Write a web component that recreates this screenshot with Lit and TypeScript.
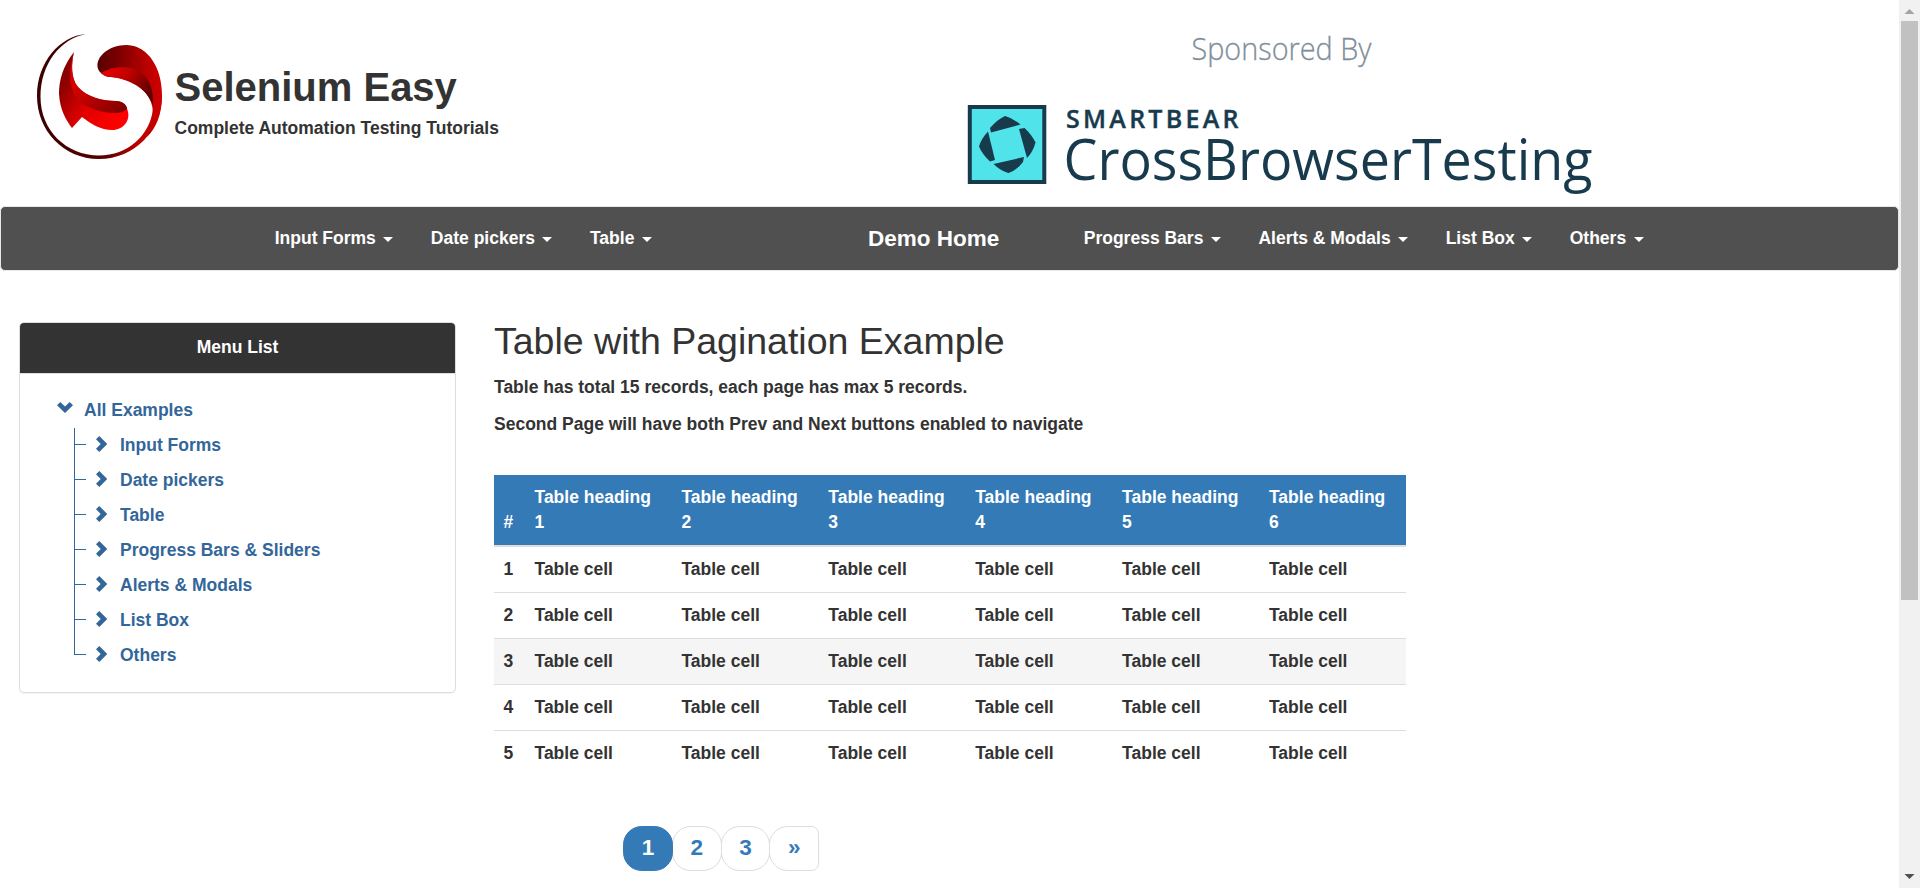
import { LitElement, html, css } from "lit";
import { customElement } from "lit/decorators.js";

const SANS = css`"Liberation Sans", Arial, Helvetica, sans-serif`;

@customElement("site-header")
class SiteHeader extends LitElement {
  static styles = css`
    :host { display: flex; height: 206px; font-family: ${SANS}; color: #333; }
    .brand { display: flex; width: 968px; box-sizing: border-box; padding: 33px 0 0 37px; }
    .mark { width: 126px; height: 126px; flex: none; }
    .names { padding: 32px 0 0 11.5px; white-space: nowrap; }
    .title { font-size: 40px; font-weight: 700; line-height: 44px; }
    .sub { font-size: 17.5px; font-weight: 700; line-height: 25px; margin-top: 7px; }
    .sponsor { width: 931px; height: 206px; flex: none; overflow: visible; }
    .sponsor text { font-family: "Open Sans", sans-serif; }
  `;
  render() {
    return html`
      <div class="brand">
        <svg class="mark" viewBox="37 33 126 126">
          <defs>
            <linearGradient id="ring" x1="0" y1="0" x2="1" y2="0"><stop offset="0" stop-color="#3a0000"/><stop offset=".55" stop-color="#5a0000"/><stop offset=".8" stop-color="#b80000"/><stop offset="1" stop-color="#d00000"/></linearGradient>
            <linearGradient id="top" x1="0" y1="0" x2="1" y2="0"><stop offset="0" stop-color="#5a0000"/><stop offset=".3" stop-color="#780000"/><stop offset=".75" stop-color="#b80000"/><stop offset="1" stop-color="#d00000"/></linearGradient>
            <linearGradient id="fold" x1="0" y1="0" x2="1" y2=".5"><stop offset="0" stop-color="#f00000"/><stop offset=".5" stop-color="#c00000"/><stop offset="1" stop-color="#600000"/></linearGradient>
            <linearGradient id="left" x1="0" y1="0" x2="1" y2=".7"><stop offset="0" stop-color="#780000"/><stop offset=".25" stop-color="#900000"/><stop offset=".6" stop-color="#e00000"/><stop offset="1" stop-color="#ff0000"/></linearGradient>
            <linearGradient id="inner" x1="0" y1="0" x2="1" y2="1"><stop offset="0" stop-color="#f00000"/><stop offset=".45" stop-color="#c80000"/><stop offset="1" stop-color="#780000"/></linearGradient>
          </defs>
          <path fill="url(#ring)" d="M86 34C60 36 37 62 37 96C37 130 63 159 99 159C135 159 162 130 162 95L153 109C150 135 128 155.500 99 155.500C66 155.500 40.500 130 40.500 97C40.500 64 60 39 86 34Z"/>
          <path fill="url(#top)" d="M101 73C91 64 103 45 127 45C149 46 162 69 162 95C162 115 156 128 147 137C154 123 155 108 149 98C142 84 125 78 111 77C106 77 103 75 101 73Z"/>
          <path fill="url(#fold)" d="M101 73C111 67 123 65 134 69C148 74 154 88 153 105C146 87 128 79 111 77C106 77 103 75 101 73Z"/>
          <path fill="url(#left)" d="M74 52C63 66 59 80 59 94C60 110 66 120 72 128L82 117C91 124 101 130 112 130C124 130 130 120 128 112C127 105 122 101 116 101C102 101 87 97 78 87C71 79 71 64 74 52Z"/>
          <path fill="url(#inner)" d="M74 52C71 64 71 79 78 87C87 97 102 101 116 101C123 101 127 105 127 109C120 117 94 112 81 103C69 94 68 71 74 52Z"/>
        </svg>
        <div class="names">
          <div class="title">Selenium Easy</div>
          <div class="sub">Complete Automation Testing Tutorials</div>
        </div>
      </div>
      <svg class="sponsor" viewBox="968 0 931 206">
        <text x="1191.500" y="60" font-size="31" font-weight="300" fill="#7f8e9b" stroke="#7f8e9b" stroke-width=".3" textLength="180" lengthAdjust="spacingAndGlyphs">Sponsored By</text>
        <rect x="969.8" y="107" width="74.5" height="75" fill="#50e3ea" stroke="#183a4d" stroke-width="4"/>
        <g fill="#183a4d">
          <path d="M991 132.500L990 128Q998 119 1005 116Q1013 118 1020.500 124.500Z"/>
          <path d="M1019 129L1024.500 128Q1032 135 1035.500 142.500Q1033 152 1027 158Z"/>
          <path d="M993.500 164L1024 157L1023 162Q1017 170 1008.500 173Q1000 170.500 993.500 164Z"/>
          <path d="M988 131.500L995 160L990 161.500Q982 154 979 146.500Q981 139 988 131.500Z"/>
        </g>
        <text x="1066" y="127.500" font-size="25" font-weight="600" fill="#183a4d" stroke="#183a4d" stroke-width=".4" textLength="172.500" lengthAdjust="spacing">SMARTBEAR</text>
        <text x="1063.500" y="180" font-size="56" fill="#183a4d" textLength="529" lengthAdjust="spacingAndGlyphs">CrossBrowserTesting</text>
      </svg>`;
  }
}

@customElement("site-nav")
class SiteNav extends LitElement {
  static styles = css`
    :host { display: flex; box-sizing: border-box; height: 65px; background: #505050; border: 1px solid #e7e7e7; border-radius: 5px; font: 700 17.5px/25px ${SANS}; color: #fff; white-space: nowrap; }
    .group { display: flex; padding: 19px 0 0; }
    .left { width: 551px; padding-left: 255px; }
    .home { width: 258px; padding-top: 19px; font-size: 22.5px; }
    .home span { padding-left: 61px; }
    .item { display: flex; align-items: center; padding: 0 18.75px; height: 25px; }
    .caret { width: 0; margin-left: 7.5px; border-top: 5px solid #fff; border-left: 5px solid transparent; border-right: 5px solid transparent; margin-top: 2px; }
  `;
  item(label: string) {
    return html`<div class="item">${label}<span class="caret"></span></div>`;
  }
  render() {
    return html`
      <div class="group left">${["Input Forms", "Date pickers", "Table"].map((l) => this.item(l))}</div>
      <div class="group home"><span>Demo Home</span></div>
      <div class="group">${["Progress Bars", "Alerts & Modals", "List Box", "Others"].map((l) => this.item(l))}</div>`;
  }
}

@customElement("menu-panel")
class MenuPanel extends LitElement {
  static styles = css`
    :host { display: block; box-sizing: border-box; width: 437px; height: 371px; border: 1px solid #ddd; border-radius: 5px; box-shadow: 0 1px 1px rgba(0,0,0,.05); font: 700 17.5px/25px ${SANS}; overflow: hidden; }
    .head { height: 51px; padding-top: 12px; box-sizing: border-box; background: #333; color: #fff; text-align: center; border-bottom: 1px solid #ddd; }
    .tree { color: #336699; padding-top: 24px; }
    .root { display: flex; padding-left: 36.5px; height: 30px; line-height: 25px; }
    .root svg { width: 16px; height: 11px; margin: 4px 11.5px 0 0; }
    .branch { margin: 0 0 0 54px; }
    .row { display: flex; height: 35px; line-height: 35px; }
    .tick { width: 12px; height: 35px; box-sizing: border-box; border-left: 1px solid #336699; background: linear-gradient(#336699, #336699) 0 16px / 12px 1px no-repeat; }
    .row:last-child .tick { height: 17px; }
    .row svg { width: 11px; height: 16px; margin: 8px 13px 0 10px; }
    svg { fill: #336699; flex: none; }
  `;
  render() {
    const items = ["Input Forms", "Date pickers", "Table", "Progress Bars & Sliders", "Alerts & Modals", "List Box", "Others"];
    return html`
      <div class="head">Menu List</div>
      <div class="tree">
        <div class="root"><svg viewBox="0 0 16 11"><path d="M3.300 0L8 4.600L12.700 0L16 3.200L8 11L0 3.200Z"/></svg>All Examples</div>
        <div class="branch">
          ${items.map((t) => html`<div class="row"><span class="tick"></span><svg viewBox="0 0 11 16"><path d="M3.300 0L11.200 8L3.300 16L0 12.700L4.700 8L0 3.300Z"/></svg>${t}</div>`)}
        </div>
      </div>`;
  }
}

@customElement("paged-table")
class PagedTable extends LitElement {
  static styles = css`
    :host { display: block; width: 912px; font: 700 17.5px/25px ${SANS}; color: #333; }
    .title { font-size: 37.5px; font-weight: 400; line-height: 41px; white-space: nowrap; }
    .note { margin-top: 12px; }
    .note.first { margin-top: 13px; }
    .table { margin-top: 38px; }
    .row { display: grid; grid-template-columns: 30.5px repeat(6, 146.9px); border-bottom: 1px solid #ddd; height: 45px; align-items: end; }
    .row:last-child { border-bottom: 0; }
    .row > span { padding: 0 10px 10px; }
    .row > span:first-child { padding-left: 9.5px; padding-right: 0; }
    .head { height: 70px; background: #337ab7; color: #fff; border-bottom: 2px solid #ddd; }
    .hover { background: #f5f5f5; }
    .pages { display: flex; margin: 50px 0 0 129px; font-size: 22.5px; }
    .page { box-sizing: border-box; width: 49.8px; height: 45px; margin-right: -1px; border: 1px solid #ddd; border-radius: 18.75px; color: #337ab7; text-align: center; line-height: 41px; background: #fff; }
    .page.active { background: #337ab7; border-color: #337ab7; color: #fff; z-index: 1; }
    .page:last-child { border-top-right-radius: 7.5px; border-bottom-right-radius: 7.5px; }
  `;
  render() {
    const cols = [1, 2, 3, 4, 5, 6];
    return html`
      <div class="title">Table with Pagination Example</div>
      <div class="note first">Table has total 15 records, each page has max 5 records.</div>
      <div class="note">Second Page will have both Prev and Next buttons enabled to navigate</div>
      <div class="table">
        <div class="row head"><span>#</span>${cols.map((c) => html`<span>Table heading ${c}</span>`)}</div>
        ${[1, 2, 3, 4, 5].map((r) => html`<div class="row ${r === 3 ? "hover" : ""}"><span>${r}</span>${cols.map(() => html`<span>Table cell</span>`)}</div>`)}
      </div>
      <div class="pages">${["1", "2", "3", "»"].map((p, i) => html`<div class="page ${i === 0 ? "active" : ""}">${p}</div>`)}</div>`;
  }
}

@customElement("scroll-bar")
class ScrollBar extends LitElement {
  static styles = css`
    :host { display: flex; flex-direction: column; width: 21px; height: 888px; background: #f1f1f1; }
    .end { display: block; width: 21px; height: 21px; }
    .thumb { width: 17px; height: 579px; margin: 0 2px; background: #c1c1c1; }
    .space { flex: 1; }
  `;
  render() {
    return html`
      <svg class="end" viewBox="0 0 21 21"><path fill="#a3a3a3" d="M5.500 14L10.500 9L15.500 14Z"/></svg>
      <div class="thumb"></div>
      <div class="space"></div>
      <svg class="end" viewBox="0 0 21 21"><path fill="#505050" d="M5.500 7L10.500 12L15.500 7Z"/></svg>`;
  }
}

@customElement("app-root")
class AppRoot extends LitElement {
  static styles = css`
    :host { display: flex; width: 1920px; height: 888px; overflow: hidden; background: #fff; }
    .page { width: 1899px; flex: none; }
    .body { display: flex; padding: 51px 0 0 19px; }
    .main { margin: -1px 0 0 38px; }
  `;
  render() {
    return html`
      <div class="page">
        <site-header></site-header>
        <site-nav></site-nav>
        <div class="body">
          <menu-panel></menu-panel>
          <paged-table class="main"></paged-table>
        </div>
      </div>
      <scroll-bar></scroll-bar>`;
  }
}
